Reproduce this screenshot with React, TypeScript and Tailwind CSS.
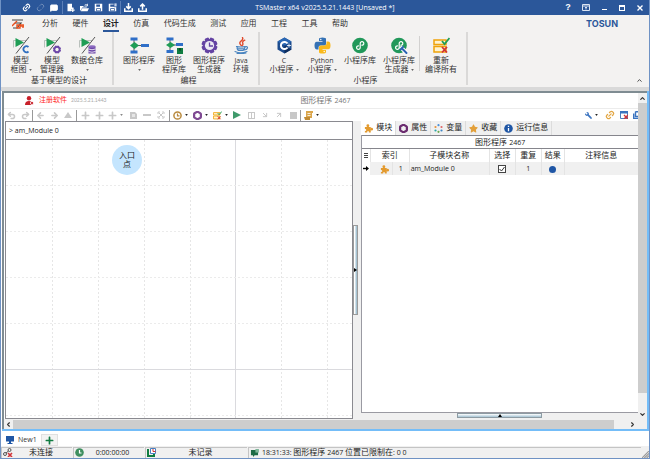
import React from "react";
import { FaStar, FaWrench, FaPlus } from "react-icons/fa";
import {
  Link2,
  Unlink2,
  MessageSquare,
  ChevronUp,
  ChevronDown,
  ChevronLeft,
  ChevronRight,
  Undo2,
  Redo2,
  ArrowLeft,
  ArrowRight,
  ArrowDownRight,
  ArrowUpRight,
  Hexagon,
} from "lucide-react";

/* Latin runs are set one pixel smaller than the Chinese text around them. */
const Latin = ({ children }: { children: React.ReactNode }) => (
  <span className="font-['Open_Sans','Noto_Sans_CJK_SC',sans-serif] text-[7px]">{children}</span>
);

/* ---------- title bar ---------- */

const FilePlus = () => (
  <svg viewBox="0 0 12 12" className="size-[9px]" fill="#fff">
    <path d="M2 1h6v5h2v2H7v3H2z" />
    <path d="M9 7v5M6.500 9.500h5" stroke="#fff" strokeWidth="1.600" />
  </svg>
);
const OpenFolder = () => (
  <svg viewBox="0 0 12 12" className="size-[9px]" fill="#fff">
    <path d="M0 4h4l1 1h4v1H3L1 10H0zM3 7h9l-2 4H1z" />
    <path d="M6 3q2-2 4 0M10 1v3H7" stroke="#fff" fill="none" />
  </svg>
);
const Save = ({ all }: { all?: boolean }) => (
  <svg viewBox="0 0 12 12" className="size-[9px]">
    <path d="M1 1h10v10H1z" fill="#fff" />
    <path d="M3 2h5v3H3zM3 7h6v4H3z" fill="#2b579a" />
    <path d="M4 8h4v2H4z" fill="#fff" />
    {all && <path d="M8 0h4v5H8z" fill="#c5d3ea" stroke="#2b579a" />}
  </svg>
);
const Tray = ({ up }: { up?: boolean }) => (
  <svg viewBox="0 0 12 12" className="size-[9px]" fill="none" stroke="#fff" strokeWidth="2">
    <path d="M1 7v4h10V7" />
    <path d={up ? "M6 9V2M3 4.500 6 1.500 9 4.500" : "M6 0v7M3 4.500 6 7.500 9 4.500"} />
  </svg>
);

function TitleButton({ label, width = "w-[14px]", children }: { label: string; width?: string; children: React.ReactNode }) {
  return (
    <button aria-label={label} className={`flex h-[14px] items-center justify-center ${width}`}>
      {children}
    </button>
  );
}

function TitleBar() {
  return (
    <header className="relative flex h-[15px] items-center bg-[#2b579a] text-white">
      <div className="flex items-center pl-[18px]">
        <TitleButton label="连接"><Link2 size={9} strokeWidth={3} className="-rotate-45" /></TitleButton>
        <TitleButton label="断开"><Unlink2 size={9} strokeWidth={2} className="-rotate-45 opacity-40" /></TitleButton>
        <TitleButton label="消息"><MessageSquare size={8} strokeWidth={3} fill="white" /></TitleButton>
        <span className="ml-px h-[13px] w-px bg-[#5b7fb8]" />
        <TitleButton label="新建"><FilePlus /></TitleButton>
        <TitleButton label="打开"><OpenFolder /></TitleButton>
        <TitleButton label="保存"><Save /></TitleButton>
        <TitleButton label="另存为"><Save all /></TitleButton>
        <span className="ml-px h-[13px] w-px bg-[#5b7fb8]" />
        <TitleButton label="导入"><Tray /></TitleButton>
        <TitleButton label="导出"><Tray up /></TitleButton>
      </div>
      <h1 className="pointer-events-none absolute inset-x-0 text-center leading-[14px]">
        <Latin>TSMaster x64 v2025.5.21.1443 [Unsaved *]</Latin>
      </h1>
      <div className="ml-auto flex items-center">
        <TitleButton label="帮助" width="w-[18px]"><span className="text-[9px] font-bold">?</span></TitleButton>
        <TitleButton label="功能区显示选项" width="w-[18px]">
          <svg viewBox="0 0 8 7" className="h-[7px] w-[8px]" fill="none" stroke="#dbe4f2">
            <path d="M.5.500h7v6h-7zM1 2h6M4 5.500V3M3 4l1-1 1 1" />
          </svg>
        </TitleButton>
        <TitleButton label="最小化" width="w-[18px]"><span className="mt-[4px] h-px w-[5px] bg-white" /></TitleButton>
        <TitleButton label="最大化" width="w-[18px]"><span className="h-[6px] w-[6px] border border-t-2 border-white" /></TitleButton>
        <TitleButton label="关闭" width="w-[18px]">
          <svg viewBox="0 0 6 6" className="size-[6px]" stroke="#fff" strokeWidth="1.400"><path d="m.5.500 5 5m0-5-5 5" /></svg>
        </TitleButton>
      </div>
    </header>
  );
}

/* ---------- ribbon ---------- */

const tabs = ["分析", "硬件", "设计", "仿真", "代码生成", "测试", "应用", "工程", "工具", "帮助"];

const ModelBase = ({ children }: { children: React.ReactNode }) => (
  <svg viewBox="0 0 17 17" className="size-[17px]">
    <path d="M.5 3.500h13M.5 3.500v7" stroke="#a9b2ae" strokeWidth=".8" fill="none" />
    <path d="M2.500 1v9L11 5.500z" fill="#1f9d55" />
    <path d="M16 0 3 16.500" stroke="#555" strokeWidth="1" />
    {children}
  </svg>
);
const ModelC = () => (
  <ModelBase><path d="M15.500 10a3 3 0 1 0 0 4.500" fill="none" stroke="#2f6fc0" strokeWidth="1.800" /></ModelBase>
);
const GearPath = ({ cx, cy, r, color }: { cx: number; cy: number; r: number; color: string }) => (
  <g>
    {[22, 67, 112, 157].map((a) => (
      <rect key={a} x={cx - r} y={cy - r * 0.28} width={r * 2} height={r * 0.56} rx={r * 0.15} fill={color} transform={`rotate(${a} ${cx} ${cy})`} />
    ))}
    <circle cx={cx} cy={cy} r={r * 0.82} fill={color} />
    <circle cx={cx} cy={cy} r={r * 0.42} fill="#f3f2f1" />
  </g>
);
const ModelGear = () => <ModelBase><GearPath cx={13} cy={12.500} r={4} color="#6b45a8" /></ModelBase>;
const ModelDb = () => (
  <ModelBase>
    <path d="M9.500 9.500h7v7h-7z" fill="#6b45a8" />
    <ellipse cx="13" cy="9.500" rx="3.500" ry="1.300" fill="#8c6bc0" />
    <path d="M9.500 12q3.500 1.500 7 0M9.500 14.500q3.500 1.500 7 0" fill="none" stroke="#fff" strokeWidth=".8" />
  </ModelBase>
);
const Flow = () => (
  <svg viewBox="0 0 19 17" className="h-[17px] w-[19px]">
    <path d="M4 3v11M4 8.500h10" stroke="#333" strokeWidth=".8" />
    <path d="M.5.500h7v3h-7zM.5 13.500h7v3h-7zM11 7h8v3h-8z" fill="#2f6fc8" />
    <path d="m0 8.500 4.500-3.500L9 8.500 4.500 12z" fill="#1f9d55" />
  </svg>
);
const FlowLib = () => (
  <svg viewBox="0 0 17 17" className="size-[17px]">
    <path d="M4 3v11M4 8h10" stroke="#333" strokeWidth=".8" />
    <path d="M.5.500h7v3h-7zM.5 13h7v3h-7zM10 6h7v3h-7z" fill="#2f6fc8" />
    <path d="m0 8 4.500-3L9 8l-4.500 3z" fill="#1f9d55" />
    <path d="M11 11h6v6h-6z" fill="#107c41" />
    <path d="M13 11v3l1-.7 1 .7v-3z" fill="#0a5028" />
  </svg>
);
const GearClock = () => (
  <svg viewBox="0 0 17 17" className="size-[17px]">
    <GearPath cx={8.500} cy={8.500} r={8} color="#6443a3" />
    <circle cx="8.500" cy="8.500" r="4.600" fill="#eceaf4" />
    <path d="M8.500 5.500V9H12" fill="none" stroke="#6443a3" strokeWidth="1.300" />
  </svg>
);
const Cup = () => (
  <svg viewBox="0 0 17 17" className="size-[17px]" fill="none" strokeLinecap="round">
    <path d="M9.500.500q1 2-1.500 3.700t0 4M11.800 3.200Q9 4.500 9.700 6T9 8.700" stroke="#e04a2c" strokeWidth="1.400" />
    <path d="M3.500 9.500q4.500 1 8.500 0M4 9.500q0 3.500 1.500 4h4.500q1.500-.5 2-4M12 9.800q2.800-.6 2.500 1T11.500 13M5 11.800h6" stroke="#4a84bf" strokeWidth="1.200" />
    <path d="M2 14.500q5.500 2.800 12 0M4 16.400q5 .6 9-.4" stroke="#4a84bf" strokeWidth="1.100" />
  </svg>
);
const CHex = () => (
  <svg viewBox="0 0 17 17" className="size-[17px]">
    <path d="m8.500.500 7 4v8l-7 4-7-4v-8z" fill="#1c4c8e" />
    <path d="m8.500.500 7 4-7 4-7-4z" fill="#2b68b4" />
    <path d="m8.500 8.500 7 4-7 4z" fill="#0d2c5c" />
    <path d="M11.500 6.500a3.600 3.600 0 1 0 0 4" fill="none" stroke="#fff" strokeWidth="2" />
    <path d="M11 8.500h4M13 6.500v4" stroke="#fff" strokeWidth=".8" />
  </svg>
);
const Python = () => (
  <svg viewBox="0 0 17 17" className="size-[17px]">
    <path d="M5 4V2q0-1.500 3.500-1.500T12 2v5q0 1.500-2 1.500H6.500Q4.500 8.500 4.500 10.500v2H3Q.5 12.500.5 8.500T3 4.700h5.500V4z" fill="#3572b5" />
    <path d="M12 13v2q0 1.500-3.500 1.500T5 15v-5q0-1.500 2-1.500h3.500q2 0 2-2v-2H14q2.500 0 2.500 4T14 12.300H8.500V13z" fill="#f9b91c" />
    <circle cx="6.800" cy="2.500" r=".7" fill="#fff" /><circle cx="10.200" cy="14.500" r=".7" fill="#fff" />
  </svg>
);
const MiniApp = ({ tool }: { tool?: boolean }) => (
  <svg viewBox="0 0 17 17" className="size-[17px]" strokeLinecap="round">
    <circle cx="8" cy="8.500" r="7.800" fill="#21985a" />
    <path d="M6.500 8.800a1.800 1.800 0 1 0 1.700 1.800V6.400a1.800 1.800 0 1 1 1.700 1.800" fill="none" stroke="#fff" strokeWidth="1.200" />
    {tool && <path d="m10.500 11 4.500 4.500" stroke="#fff" strokeWidth="4" />}
    {tool && <path d="m11 11.500 4.500 4.500M9.500 12.500l2.500-2.500" stroke="#2b62b3" strokeWidth="2" />}
  </svg>
);
const Rebuild = ({ className = "size-[17px]" }: { className?: string }) => (
  <svg viewBox="0 0 17 17" className={className} fill="none">
    <path d="M1 3h12v4.500H1zM1 9.500h12V15H1z" fill="#fff3cf" stroke="#f0a30a" strokeWidth="1.500" />
    <path d="m9 4 2.500 3 5-6" stroke="#1f9d55" strokeWidth="1.800" />
    <path d="m9 10 5 5.500m0-5.500-5 5.500" stroke="#d13438" strokeWidth="1.800" />
  </svg>
);
const Puzzle = () => (
  <svg viewBox="0 0 10 10" className="size-[9px]" fill="#e39a2e">
    <path d="M1 3.200h6.500v6.300H5.400q.4-1.700-.9-1.700t-.9 1.700H1V7.600q1.500.3 1.500-1T1 5.500z" />
    <circle cx="4.300" cy="2" r="1.600" />
    <circle cx="8.500" cy="5.800" r="1.500" />
  </svg>
);

type Item = { icon: React.ReactNode; lines: React.ReactNode[]; width: string; arrow?: boolean };

const Caret = ({ className = "" }: { className?: string }) => (
  <svg viewBox="0 0 4 3" className={`inline-block h-[2px] w-[3px] shrink-0 ${className}`}><path d="M0 0h4L2 3z" fill="currentColor" /></svg>
);

function RibbonItem({ icon, lines, width, arrow }: Item) {
  return (
    <button className={`flex flex-col items-center ${width}`}>
      <span className="flex h-[21px] items-center">{icon}</span>
      <span className="h-[9px] whitespace-nowrap leading-[9px]">{lines[0]}</span>
      <span className="flex h-[9px] items-center gap-[2px] whitespace-nowrap leading-[9px]">
        {lines[1]}
        {arrow && <Caret className="text-[#666]" />}
      </span>
    </button>
  );
}

function RibbonGroup({ title, width, items, children }: { title: string; width: string; items: Item[]; children?: React.ReactNode }) {
  return (
    <section className={`flex h-[53px] flex-col border-r-2 border-[#dad9d8] pl-[5px] ${width}`}>
      <div className="flex h-[43px] shrink-0 pt-[3px]">
        {items.map((it, i) => <RibbonItem key={i} {...it} />)}
        {children}
      </div>
      <h2 className="text-center leading-[11px]">{title}</h2>
    </section>
  );
}

function Ribbon() {
  return (
    <div className="bg-[#f3f2f1] text-[#333]">
      <nav className="flex h-[17px] items-center">
        <svg viewBox="0 0 12 10" className="ml-[11px] mr-[18px] h-[10px] w-[12px]" fill="none">
          <path d="M0 1h11M3 4h6L5 9H1" stroke="#444" strokeWidth="1.200" />
          <path d="M0 7 5 2M5 6v3h3V6zM9 5v2h3M11 5v4" stroke="#e8501e" strokeWidth="1.400" />
        </svg>
        <div className="flex w-[306px] justify-between">
          {tabs.map((t) => (
            <button key={t} className={`h-[16px] border-b-2 pt-px leading-[14px] ${t === "设计" ? "border-[#2b579a] font-bold text-[#222]" : "border-transparent"}`}>
              {t}
            </button>
          ))}
        </div>
        <span className="ml-auto mr-[31px] font-['Inter',sans-serif] text-[9px] font-bold leading-[14px] text-[#2b579a]">TOSUN</span>
      </nav>
      <div className="flex h-[55px]">
        <RibbonGroup
          title="基于模型的设计"
          width="w-[113px]"
          items={[
            { icon: <ModelC />, lines: ["模型", "框图"], width: "w-[30px]", arrow: true },
            { icon: <ModelGear />, lines: ["模型", "管理器"], width: "w-[32px]" },
            { icon: <ModelDb />, lines: ["数据仓库", ""], width: "w-[38px]", arrow: true },
          ]}
        />
        <RibbonGroup
          title="编程"
          width="w-[146px]"
          items={[
            { icon: <Flow />, lines: ["图形程序", ""], width: "w-[40px]", arrow: true },
            { icon: <FlowLib />, lines: ["图形", "程序库"], width: "w-[30px]" },
            { icon: <GearClock />, lines: ["图形程序", "生成器"], width: "w-[40px]" },
            { icon: <Cup />, lines: [<Latin>Java</Latin>, "环境"], width: "w-[24px]" },
          ]}
        />
        <RibbonGroup
          title="小程序"
          width="w-[208px]"
          items={[
            { icon: <CHex />, lines: [<Latin>C</Latin>, "小程序"], width: "w-[38px]", arrow: true },
            { icon: <Python />, lines: [<Latin>Python</Latin>, "小程序"], width: "w-[38px]", arrow: true },
            { icon: <MiniApp />, lines: ["小程序库", ""], width: "w-[38px]" },
            { icon: <MiniApp tool />, lines: ["小程序库", "生成器"], width: "w-[40px]", arrow: true },
          ]}
        >
          <span className="mt-px h-[35px] w-px bg-[#d2d1d0]" />
          <RibbonItem icon={<Rebuild />} lines={["重新", "编译所有"]} width="w-[42px]" />
        </RibbonGroup>
        <button aria-label="折叠功能区" className="ml-auto mr-[6px] flex items-end pb-[3px]">
          <ChevronUp size={7} strokeWidth={3} />
        </button>
      </div>
    </div>
  );
}

/* ---------- document toolbar ---------- */

function Tool({ label, children, width = "w-[14px]", caret }: { label: string; children: React.ReactNode; width?: string; caret?: boolean }) {
  return (
    <button aria-label={label} className={`flex h-[13px] items-center justify-center gap-[3px] text-[#c8c8c8] ${width}`}>
      {children}
      {caret && <Caret className="text-[#222]" />}
    </button>
  );
}
const ToolSep = () => <span className="h-[11px] w-px bg-[#999]" />;

function Toolbar() {
  return (
    <div className="flex h-[13px] items-center overflow-hidden border-t border-[#ececec] bg-white">
      <Tool label="撤销"><Undo2 size={9} strokeWidth={4} /></Tool>
      <Tool label="重做"><Redo2 size={9} strokeWidth={4} /></Tool>
      <ToolSep />
      <Tool label="后退"><ArrowLeft size={9} strokeWidth={4} /></Tool>
      <Tool label="前进"><ArrowRight size={9} strokeWidth={4} /></Tool>
      <Tool label="上移"><svg viewBox="0 0 8 6" className="h-[6px] w-[8px]" fill="currentColor"><path d="M4 0 8 6H0z" /></svg></Tool>
      <span className="w-px" />
      <ToolSep />
      <span className="w-px" />
      <Tool label="添加上方"><FaPlus size={9} /></Tool>
      <Tool label="添加下方"><FaPlus size={9} /></Tool>
      <Tool label="添加" width="w-[18px]"><FaPlus size={9} /><Caret className="text-[#888]" /></Tool>
      <span className="w-[2px]" />
      <Tool label="复制"><svg viewBox="0 0 7 7" className="size-[7px]" fill="currentColor"><path d="M0 0h5l2 2v5H0z" /><path d="M2 2h3v3H2z" fill="#e6e6e6" /></svg></Tool>
      <Tool label="删除"><span className="h-[2px] w-[8px] bg-[#c8c8c8]" /></Tool>
      <Tool label="布局"><svg viewBox="0 0 8 8" className="size-[8px]" fill="none" stroke="currentColor"><path d="M1 3V1h2M5 1h2v2M7 5v2H5M3 7H1V5M2 2l4 4M6 2 2 6" /></svg></Tool>
      <span className="w-px" />
      <ToolSep />
      <Tool label="运行一次" width="w-[20px]" caret><svg viewBox="0 0 9 9" className="size-[9px]" fill="none" stroke="#b98a3e" strokeWidth="1.500"><circle cx="4.500" cy="4.500" r="3.600" /><path d="M4.500 2.500v2.300h2" strokeWidth="1.200" /></svg></Tool>
      <Tool label="设置" width="w-[20px]" caret><Hexagon size={9} strokeWidth={6} className="text-[#7f4a93]" /></Tool>
      <Tool label="编译" width="w-[20px]" caret><Rebuild className="size-[9px]" /></Tool>
      <Tool label="启动"><svg viewBox="0 0 8 8" className="size-[8px]" fill="#3f9a6b"><path d="m0 0 8 4-8 4z" /></svg></Tool>
      <Tool label="暂停"><span className="flex size-[7px] justify-center border border-current"><span className="h-full w-px bg-current" /></span></Tool>
      <Tool label="步入"><ArrowDownRight size={8} strokeWidth={3} /></Tool>
      <Tool label="步出"><ArrowUpRight size={8} strokeWidth={3} /></Tool>
      <Tool label="停止"><span className="size-[7px] bg-current" /></Tool>
      <ToolSep />
      <Tool label="脚本" width="w-[20px]" caret><svg viewBox="0 0 9 9" className="size-[9px]" fill="#dba64c"><path d="M2 0h7v2H8v5H2z" /><path d="M0 6h6v3H1z" fill="#c08a34" /><path d="M3.500 2.500h3M3.500 4.500h3" stroke="#fff" strokeWidth=".8" /></svg></Tool>
      <span className="flex-1" />
      <Tool label="工具" width="w-[20px]" caret><FaWrench size={7} className="-scale-x-100 text-[#3b74c0]" /></Tool>
      <span className="w-[2px]" />
      <Tool label="链接"><Link2 size={10} strokeWidth={3} className="-rotate-45 text-[#e3a745]" /></Tool>
      <Tool label="关闭窗口"><svg viewBox="0 0 8 8" className="size-[8px]"><path d="M.5.500h7v7h-7z" fill="#fff" stroke="#4a7fc0" /><path d="M0 0h8v2.500H0z" fill="#3b74c0" /><path d="m4 4 4 4m0-4-4 4" stroke="#d13438" strokeWidth="1.300" /></svg></Tool>
      <button aria-label="层叠窗口" className="flex w-[7px] justify-end"><svg viewBox="0 0 5 8" className="h-[8px] w-[5px]" fill="none" stroke="#3b74c0" strokeWidth="1.400"><path d="M2.500.700H6M2.500.500v5H6M.7 2.500v5H6" /></svg></button>
    </div>
  );
}

/* ---------- diagram canvas ---------- */

const COLS = [46, 92, 138, 184, 229, 275, 321];
const ROWS = [45, 91, 137, 183, 229, 275];

function Canvas() {
  return (
    <div className="relative min-h-0 flex-1 overflow-hidden bg-white">
      <svg className="absolute inset-0 size-full" shapeRendering="crispEdges">
        {COLS.map((x) => (
          <line key={x} x1={x + 0.5} x2={x + 0.5} y1="0" y2="100%" stroke={x === 229 ? "#dadade" : "#e6e6e6"} strokeDasharray={x === 229 ? undefined : "2 2"} />
        ))}
        {ROWS.map((y) => (
          <line key={y} x1="0" x2="100%" y1={y + 0.5} y2={y + 0.5} stroke={y === 229 ? "#dadade" : "#ebebeb"} strokeDasharray={y === 229 ? undefined : "2 2"} />
        ))}
      </svg>
      <div className="absolute left-[106px] top-[5px] flex size-[30px] flex-col items-center justify-center rounded-full bg-[#c4e5fe] leading-[9px] text-[#222]">
        <span>入口</span>
        <span>点</span>
      </div>
    </div>
  );
}

/* ---------- module panel ---------- */

const panelTabs: { label: string; icon: React.ReactNode }[] = [
  { label: "模块", icon: <Puzzle /> },
  { label: "属性", icon: <Hexagon size={9} strokeWidth={6} color="#6b2c6f" /> },
  {
    label: "变量",
    icon: (
      <svg viewBox="0 0 9 9" className="size-[9px]">
        <circle cx="1.500" cy="3" r="1.100" fill="#e69138" /><circle cx="4.500" cy="1.200" r="1.100" fill="#4a90d9" /><circle cx="7.500" cy="3" r="1.100" fill="#e06666" />
        <circle cx="7.500" cy="6.500" r="1.100" fill="#3d85c6" /><circle cx="4.500" cy="7.800" r="1.100" fill="#6aa84f" /><circle cx="1.500" cy="6.500" r="1.100" fill="#2ba5a5" />
      </svg>
    ),
  },
  { label: "收藏", icon: <FaStar size={9} color="#e3a03a" /> },
  {
    label: "运行信息",
    icon: (
      <svg viewBox="0 0 9 9" className="size-[9px]"><circle cx="4.500" cy="4.500" r="4.300" fill="#1f56a5" /><path d="M4.500 4v3.200M4.500 1.700v1.400" stroke="#fff" strokeWidth="1.300" /></svg>
    ),
  },
];

const cell = "border-r border-[#e4e4e4] px-0 pb-0 pt-px text-center font-normal";

function ModulePanel() {
  return (
    <aside className="flex min-w-0 flex-1 flex-col bg-[#f0f0f0] text-[#222]">
      <div role="tablist" className="flex h-[14px]">
        {panelTabs.map((t, i) => (
          <button
            key={t.label}
            role="tab"
            aria-selected={i === 0}
            className={`flex h-[14px] items-center gap-[3px] whitespace-nowrap border-r border-[#dcdcdc] px-[3px] ${i === 0 ? "bg-white" : "bg-[#f0f0f0]"}`}
          >
            {t.icon}
            {t.label}
          </button>
        ))}
      </div>
      <div className="flex min-h-0 flex-1 flex-col border-b border-l border-[#9a9aa2] bg-white">
        <h3 className="h-[14px] border-y border-[#85858c] text-center leading-[14px]">图形程序 <Latin>2467</Latin></h3>
        <table className="w-full table-fixed border-collapse leading-[12px]">
          <colgroup>
            <col className="w-[8px]" /><col className="w-[22px]" /><col className="w-[17px]" /><col className="w-[80px]" />
            <col className="w-[26px]" /><col className="w-[26px]" /><col className="w-[23px]" /><col />
          </colgroup>
          <thead>
            <tr className="h-[13px]">
              <th className={cell} aria-label="行">
                <svg viewBox="0 0 4 6" className="mx-auto h-[6px] w-[4px]" stroke="#444"><path d="M0 .5h4M0 2.500h4M0 4.500h4" /></svg>
              </th>
              <th className={cell} colSpan={2}>索引</th>
              <th className={cell}>子模块名称</th>
              <th className={cell}>选择</th>
              <th className={cell}>重复</th>
              <th className={cell}>结果</th>
              <th className="px-0 pb-0 pt-px font-normal">注释信息</th>
            </tr>
          </thead>
          <tbody>
            <tr className="h-[13px] bg-[#f0f0f0]">
              <td className="bg-white p-0"><svg viewBox="0 0 6 5" className="mx-auto h-[5px] w-[6px]"><path d="M0 2.500h4" stroke="#000" strokeWidth="1.400" /><path d="M3 0v5l3-2.500z" /></svg></td>
              <td className={cell}><span className="flex justify-end pr-[3px]"><Puzzle /></span></td>
              <td className={cell}><Latin>1</Latin></td>
              <td className="border-r border-[#e4e4e4] pb-0 pl-px pr-0 pt-px text-left"><Latin>am_Module 0</Latin></td>
              <td className={cell}>
                <label className="relative flex items-center justify-center">
                  <input type="checkbox" defaultChecked aria-label="选择 am_Module 0" className="peer size-[8px] appearance-none border border-[#444] bg-white" />
                  <svg viewBox="0 0 8 8" className="pointer-events-none absolute hidden size-[8px] peer-checked:block" fill="none" stroke="#333"><path d="m1.500 4 2 2 3-4" /></svg>
                </label>
              </td>
              <td className={cell}><Latin>1</Latin></td>
              <td className={cell}><span className="mx-auto block size-[7px] rounded-full bg-[#1f56a5]" /></td>
              <td className="p-0" />
            </tr>
          </tbody>
        </table>
      </div>
      <div className="flex h-[6px] justify-center">
        <button aria-label="展开底部面板" className="flex h-[5px] w-[85px] items-center justify-center border border-[#8d9ba3] bg-linear-to-b from-white to-[#a5c3d3]">
          <svg viewBox="0 0 4 3" className="h-[3px] w-[4px]"><path d="M0 3h4L2 0z" /></svg>
        </button>
      </div>
    </aside>
  );
}

/* ---------- status bar ---------- */

function StatusCell({ icon, children, width, grow }: { icon: React.ReactNode; children: React.ReactNode; width?: string; grow?: boolean }) {
  return (
    <div className={`flex h-[11px] items-center border-l border-t border-[#c4c4c4] pl-px ${width ?? "flex-1"}`}>
      {icon}
      <span className={grow ? "pl-[3px]" : "flex-1 pr-[3px] text-center"}>{children}</span>
    </div>
  );
}

function StatusBar() {
  return (
    <footer className="flex h-[12px] shrink-0 items-center gap-px bg-[#f0f0f0] text-[#222]">
      <StatusCell
        width="w-[71px]"
        icon={<svg viewBox="0 0 10 9" className="h-[9px] w-[10px]" fill="none" stroke="#555"><circle cx="6.500" cy="2" r="1.500" /><circle cx="2" cy="6" r="1.500" /><path d="m3 5 2.500-2" /><path d="m5 5 4 4m0-4-4 4" stroke="#d13438" strokeWidth="1.600" /></svg>}
      >
        未连接
      </StatusCell>
      <StatusCell
        width="w-[71px]"
        icon={<svg viewBox="0 0 9 9" className="size-[9px]"><circle cx="4.500" cy="4.500" r="4.300" fill="#3f8f5f" /><path d="M4.500 2v3h2" fill="none" stroke="#fff" strokeWidth="1.200" /></svg>}
      >
        <Latin>0:00:00:00</Latin>
      </StatusCell>
      <StatusCell
        width="w-[102px]"
        icon={<svg viewBox="0 0 10 9" className="h-[9px] w-[10px]" fill="none"><path d="M1 1v7h6V6" stroke="#107c41" strokeWidth="2" /><path d="M3.500.500h5v5h-5z" fill="#fff" stroke="#4a7fc0" /><path d="M6 1v2.500h2.500" stroke="#d13438" /></svg>}
      >
        未记录
      </StatusCell>
      <StatusCell
        grow
        icon={<svg viewBox="0 0 10 9" className="h-[8px] w-[9px]"><path d="M1 1h8v6H5L4 9 3 7H1z" fill="#1d6b45" /><path d="M6 0h4v4H6z" fill="#7fb79a" /></svg>}
      >
        <Latin>18:31:33: </Latin>图形程序<Latin> 2467 </Latin>位置已限制在<Latin>: 0 0</Latin>
      </StatusCell>
      <svg viewBox="0 0 6 6" className="size-[7px] self-end" stroke="#999"><path d="M0 6 6 0M2 6l4-4M4 6l2-2" /></svg>
    </footer>
  );
}

const arrow = "flex shrink-0 items-center justify-center text-[#333]";

export default function App() {
  return (
    <div className="flex h-screen flex-col overflow-hidden border-x border-b border-[#6f92c4] bg-white font-['Liberation_Sans','Noto_Sans_CJK_SC',sans-serif] text-[8px]">
      <TitleBar />
      <Ribbon />
      <div className="h-[4px] bg-[#d9d9d9]" />

      <main className="ml-px flex min-h-0 flex-1 flex-col border-b-2 border-r-2 border-[#74bdf8] bg-white">
        <div className="flex min-h-0 flex-1 flex-col border-l-2 border-t-2 border-[#7f8c92]">
          <div className="flex min-h-0 flex-1">
            <div className="flex min-w-0 flex-1 flex-col">
              <div className="relative flex h-[15px] items-center">
                <button className="ml-[21px] flex items-center gap-[5px] text-[7px] text-[#f22]">
                  <svg viewBox="0 0 9 9" className="size-[9px]"><circle cx="4" cy="2.300" r="2.200" fill="#c8202a" /><path d="M0 9q0-4 4-4t4 4z" fill="#c8202a" /><circle cx="7" cy="7" r="1.600" fill="#c8202a" stroke="#fff" strokeWidth=".8" /></svg>
                  注册软件
                </button>
                <span className="ml-[4px] font-['Lato',sans-serif] text-[5px] text-[#a8a8a8]">2025.5.21.1443</span>
                <span className="absolute -right-[9px] left-0 text-center text-[#777]">图形程序 <Latin>2467</Latin></span>
              </div>
              <Toolbar />
              <div className="flex min-h-0 flex-1 pl-px">
                <section className="flex w-[55%] flex-col border border-[#8a8a90] text-[#222]">
                  <p className="h-[18px] shrink-0 border-b border-[#8a8a90] pl-[3px] leading-[18px]"><Latin>&gt; am_Module 0</Latin></p>
                  <Canvas />
                </section>
                <div className="flex w-[8px] flex-col justify-center bg-[#f0f0f0]">
                  <button aria-label="展开侧面板" className="flex h-[90px] w-[5px] items-center justify-center border border-[#9a9a9a] bg-linear-to-r from-white from-40% to-[#a5c3d3] to-60%">
                    <svg viewBox="0 0 3 4" className="h-[4px] w-[3px]"><path d="M0 0v4l3-2z" /></svg>
                  </button>
                </div>
                <ModulePanel />
              </div>
            </div>
            <div className="flex w-[9px] flex-col bg-[#f0f0f0]">
              <button aria-label="向上滚动" className={`${arrow} h-[10px]`}><ChevronUp size={7} strokeWidth={4} /></button>
              <div className="mb-[16px] flex-1 bg-[#cdcdcd]" />
              <button aria-label="向下滚动" className={`${arrow} h-[10px]`}><ChevronDown size={7} strokeWidth={4} /></button>
            </div>
          </div>
          <div className="flex h-[10px] bg-[#f0f0f0]">
            <button aria-label="向左滚动" className={`${arrow} w-[9px]`}><ChevronLeft size={7} strokeWidth={4} /></button>
            <div className="mt-px flex-1 bg-[#cdcdcd]" />
            <button aria-label="向右滚动" className={`${arrow} ml-[12px] mr-[9px] w-[12px]`}><ChevronRight size={7} strokeWidth={4} /></button>
          </div>
        </div>
      </main>

      <nav className="flex h-[15px] shrink-0 items-center bg-white pl-[5px] pt-[3px] text-[#333]">
        <button className="flex items-center gap-[4px]">
          <svg viewBox="0 0 8 8" className="size-[8px]" fill="#1f56a5"><path d="M0 0h8v5.500H0zM3 5.500h2v1.500h1.500v1h-5V7H3z" /></svg>
          <Latin>New1</Latin>
        </button>
        <button aria-label="新建页面" className="ml-[4px] flex h-[12px] w-[17px] items-center justify-center border border-[#e0e0e0] bg-[#f3f3f3]"><FaPlus size={9} color="#107c41" /></button>
      </nav>
      <StatusBar />
    </div>
  );
}
